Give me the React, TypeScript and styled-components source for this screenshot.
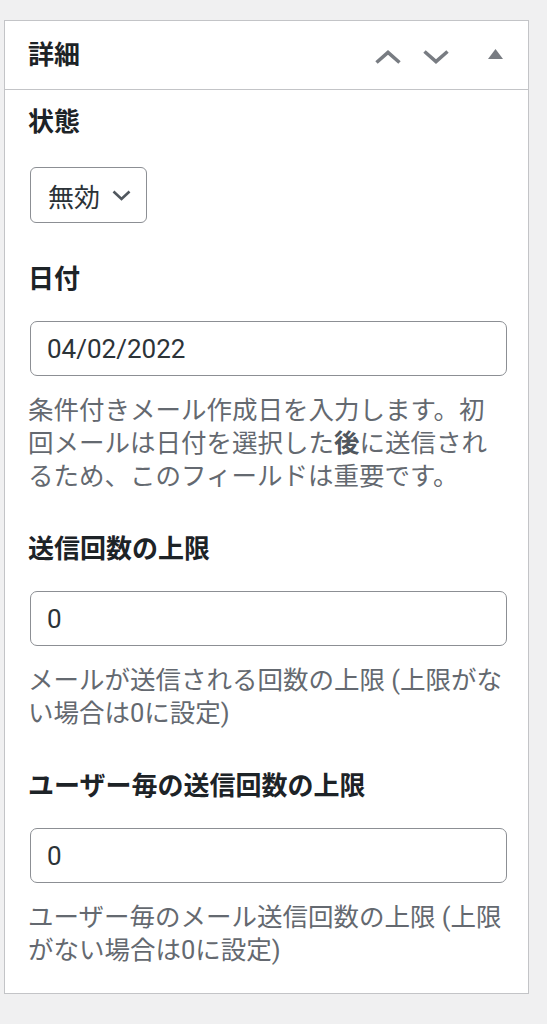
import styled, { createGlobalStyle } from 'styled-components'

const GlobalStyle = createGlobalStyle`
  html, body {
    margin: 0;
    padding: 0;
    background: #f0f0f1;
  }
  body {
    font-family: Roboto, "Noto Sans CJK JP", sans-serif;
    color: #1d2327;
  }
`

const Page = styled.div`
  padding: 20px 0 31px 4px;
`

const Postbox = styled.section`
  box-sizing: border-box;
  width: 525px;
  background: #fff;
  border: 1px solid #c3c4c7;
`

const PostboxHeader = styled.div`
  display: flex;
  align-items: center;
  justify-content: space-between;
  height: 68px;
  padding: 0 11px 0 23px;
  border-bottom: 1px solid #c3c4c7;
`

const PostboxTitle = styled.h2`
  margin: 0;
  font-size: 26px;
  font-weight: 700;
  line-height: 33px;
  color: #1d2327;
`

const HandleActions = styled.div`
  display: flex;
  align-items: center;
`

const HandleButton = styled.button<{ $width: number; $gap?: number; $offset?: number }>`
  display: flex;
  align-items: center;
  justify-content: center;
  width: ${(p) => p.$width}px;
  height: 44px;
  margin-left: ${(p) => p.$gap || 0}px;
  padding: 0;
  border: 0;
  background: none;
  color: #787c82;
  cursor: pointer;

  svg {
    transform: translateY(${(p) => p.$offset || 0}px);
  }
`

const Inside = styled.div`
  display: flex;
  flex-direction: column;
  gap: 40px;
  padding: 16px 19px 26px 23px;
`

const Field = styled.div`
  display: flex;
  flex-direction: column;
  align-items: flex-start;
`

const FieldLabel = styled.label`
  font-size: 26px;
  font-weight: 700;
  line-height: 33px;
  color: #1d2327;
`

const SelectBox = styled.div`
  box-sizing: border-box;
  display: flex;
  align-items: center;
  gap: 12px;
  height: 56px;
  margin: 28px 0 0 2px;
  padding: 0 15px 0 17px;
  border: 1px solid #8c8f94;
  border-radius: 6px;
  font-size: 26px;
  color: #2c3338;
  background: #fff;
`

const TextInput = styled.input`
  box-sizing: border-box;
  width: calc(100% - 4px);
  height: 55px;
  margin: 25px 2px 0 2px;
  padding: 0 15px 0 16px;
  border: 1px solid #8c8f94;
  border-radius: 7px;
  font-family: Roboto, "Noto Sans CJK JP", sans-serif;
  font-size: 26px;
  color: #2c3338;
  background: #fff;
  outline: none;
`

const Description = styled.p`
  margin: 18px 0 0 0;
  font-size: 25.5px;
  line-height: 33px;
  color: #646970;
`

const Emphasis = styled.b`
  font-weight: 700;
  color: #50575e;
`

const ChevronIcon = ({ up }: { up?: boolean }) => (
  <svg width="26" height="14" viewBox="0 0 26 14" fill="none">
    <polyline
      points={up ? '1.5,12.5 13,2.5 24.5,12.5' : '1.5,1.5 13,11.5 24.5,1.5'}
      stroke="currentColor"
      strokeWidth="3.6"
    />
  </svg>
)

const TriangleIcon = () => (
  <svg width="15" height="10" viewBox="0 0 15 10">
    <polygon points="7.5,0 15,10 0,10" fill="currentColor" />
  </svg>
)

const SmallChevron = () => (
  <svg width="19" height="11" viewBox="0 0 19 11" fill="none">
    <polyline points="1.5,1.5 9.5,9 17.5,1.5" stroke="#50575e" strokeWidth="2.6" />
  </svg>
)

const fields = [
  {
    label: '日付',
    value: '04/02/2022',
    description: (
      <>
        条件付きメール作成日を入力します。初回メールは日付を選択した<Emphasis>後</Emphasis>
        に送信されるため、このフィールドは重要です。
      </>
    ),
  },
  {
    label: '送信回数の上限',
    value: '0',
    description: 'メールが送信される回数の上限 (上限がない場合は0に設定)',
  },
  {
    label: 'ユーザー毎の送信回数の上限',
    value: '0',
    description: 'ユーザー毎のメール送信回数の上限 (上限がない場合は0に設定)',
  },
]

const App = () => {
  return (
    <Page>
      <GlobalStyle />
      <Postbox>
        <PostboxHeader>
          <PostboxTitle>詳細</PostboxTitle>
          <HandleActions>
            <HandleButton $width={48} $offset={2} aria-label="上へ移動">
              <ChevronIcon up />
            </HandleButton>
            <HandleButton $width={48} $offset={2} aria-label="下へ移動">
              <ChevronIcon />
            </HandleButton>
            <HandleButton $width={44} $gap={13} $offset={-1} aria-label="パネルを切り替え">
              <TriangleIcon />
            </HandleButton>
          </HandleActions>
        </PostboxHeader>
        <Inside>
          <Field>
            <FieldLabel>状態</FieldLabel>
            <SelectBox>
              <span>無効</span>
              <SmallChevron />
            </SelectBox>
          </Field>
          {fields.map((field) => (
            <Field key={field.label}>
              <FieldLabel>{field.label}</FieldLabel>
              <TextInput type="text" value={field.value} readOnly />
              <Description>{field.description}</Description>
            </Field>
          ))}
        </Inside>
      </Postbox>
    </Page>
  )
}

export default App
